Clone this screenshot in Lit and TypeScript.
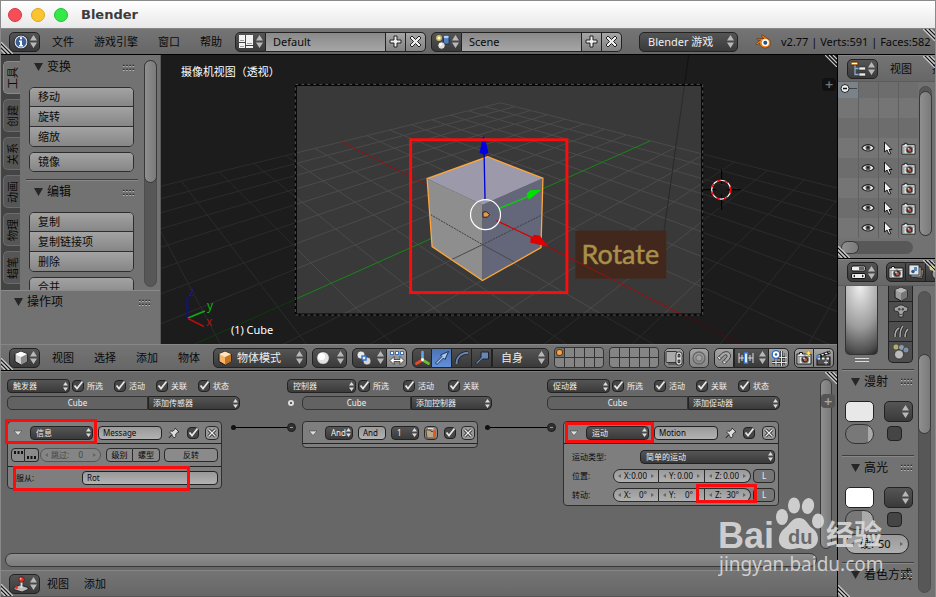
import { LitElement, html, svg, css } from "lit";
import { customElement } from "lit/decorators.js";

/* ---------- small glyphs ---------- */
const arrows = html`<svg class="arrows" width="7" height="13" viewBox="0 0 7 13"><path d="M3.500 0 7 5.500H0zM0 7.500H7L3.500 13z" /></svg>`;
const arrowsSmall = html`<svg class="arrows" width="5" height="9" viewBox="0 0 5 9"><path d="M2.500 0 5 3.500H0zM0 5.500H5L2.500 9z" /></svg>`;
const tick = html`<svg class="tick" width="12" height="12" viewBox="0 0 12 12"><path d="M2.500 5.500 5 8.500 10.500 1.500" fill="none" stroke="#e6e6e6" stroke-width="1.800" /></svg>`;
const plus = html`<svg width="13" height="13" viewBox="0 0 13 13"><path d="M5 1h3v4h4v3H8v4H5V8H1V5h4z" fill="#eee" stroke="#222" /></svg>`;
const cross = html`<svg width="13" height="13" viewBox="0 0 13 13"><path d="M3 1 6.500 4.500 10 1l2 2-3.500 3.500L12 10l-2 2-3.500-3.500L3 12l-2-2 3.500-3.500L1 3z" fill="#eee" stroke="#222" /></svg>`;
const crossSmall = html`<svg width="10" height="10" viewBox="0 0 10 10"><path d="M1.500 1.500l7 7M8.500 1.500l-7 7" stroke="#222" stroke-width="3" /><path d="M1.500 1.500l7 7M8.500 1.500l-7 7" stroke="#eee" stroke-width="1.400" /></svg>`;
const tri = html`<svg class="tri" width="9" height="8" viewBox="0 0 9 8"><path d="M0 0h9L4.500 8z" fill="#262626" /></svg>`;
const triLight = html`<svg width="8" height="6" viewBox="0 0 8 6"><path d="M0 1h8L4 5.500z" fill="#ddd" stroke="#444" stroke-width=".6" /></svg>`;
const grip = html`<svg class="grip" width="12" height="7" viewBox="0 0 12 7"><path d="M0 1.500h12M0 5.500h12" stroke="#2e2e2e" stroke-width="1.600" stroke-dasharray="1.500 1.700" /><path d="M0 2.500h12M0 6.500h12" stroke="#bbb" stroke-width="1" stroke-dasharray="1.500 1.700" /></svg>`;
const stripes = html`<svg width="12" height="12" viewBox="0 0 12 12"><path d="M0 0l12 12M4 0l8 8M8 0l4 4" stroke="#ccc" stroke-width="1.200" /><path d="M2 0l10 10M6 0l6 6" stroke="#151515" /></svg>`;
const stripesLeft = html`<svg width="12" height="12" viewBox="0 0 12 12"><path d="M0 0l12 12M0 4l8 8M0 8l4 4" stroke="#ccc" stroke-width="1.200" /><path d="M0 2l10 10M0 6l6 6" stroke="#151515" /></svg>`;
const pin = html`<svg width="12" height="12" viewBox="0 0 12 12"><path d="M7 1l4 4-1.500.300-1.800 1.800.100 2.500L6 11 3.800 7.900 1 10.800 4 7.500 1.500 5l1.200-1 2.300.200L6.700 2.500z" fill="#ddd" stroke="#222" stroke-width=".8" /></svg>`;

/* ---------- editor icons ---------- */
const icoInfo = html`<svg width="16" height="16" viewBox="0 0 16 16"><circle cx="8" cy="8" r="6" fill="#3c5f96" stroke="#dfe6f0" stroke-width="1.200" /><circle cx="8" cy="8" r="7" fill="none" stroke="#16202e" stroke-width=".7" /><path d="M7 3.300h2v2H7zM6 6.500h3v4.500h1V12.500H6V11h1V8H6z" fill="#fff" /></svg>`;
const icoLayout = html`<svg width="14" height="13" viewBox="0 0 14 13"><path d="M0 0h6v7H0zM0 8h6v5H0zM7 0h7v10H7zM7 11h7v2H7z" fill="#f2f2f2" /><path d="M1 5.500h4M1 11.500h4M8 8.500h5" stroke="#9a9a9a" /></svg>`;
const icoScene = html`<svg width="16" height="16" viewBox="0 0 16 16"><circle cx="4" cy="4" r="3" fill="#e8dc74" opacity=".75" /><circle cx="4" cy="4" r="1.500" fill="#fffbc0" /><path d="M8.500 3v7h5.500V3z" fill="#4f80c8" stroke="#18253a" stroke-width=".7" /><ellipse cx="11.200" cy="3" rx="2.700" ry="1.300" fill="#b6d0f0" /><circle cx="6.500" cy="11.500" r="3.700" fill="#ddd" stroke="#222" stroke-width=".7" /><circle cx="5.500" cy="10.500" r="1.300" fill="#fff" /></svg>`;
const icoBlender = html`<svg width="17" height="15" viewBox="0 0 17 15"><path d="M7 .8 14 5.500C17 8 16 13.500 10.500 14 6.500 14 4.800 11.500 4.500 9L2 11 .8 9.800 5.500 6H2V4.500h7L6.500 2.200z" fill="#ee7f17" stroke="#5b2b05" stroke-width=".6" /><circle cx="10.300" cy="8.700" r="3.600" fill="#fff" /><circle cx="10.300" cy="8.700" r="2" fill="#24508c" /></svg>`;
const cubeIcon = (top: string, left: string, right: string) => html`<svg width="16" height="16" viewBox="0 0 16 16"><path d="M8 1.500 14 4v7.500L8 15 2 11.500V4z" fill=${left} stroke="#161616" /><path d="M8 7v8l6-3.500V4z" fill=${right} /><path d="M8 1.500 14 4 8 7 2 4z" fill=${top} /></svg>`;
const icoCube = cubeIcon("#fff", "#d2d2d2", "#8b8b8b");
const icoOrange = cubeIcon("#ffe3bd", "#f5b468", "#c27624");
const icoGreyCube = cubeIcon("#b8b8b8", "#9c9c9c", "#777");
const icoSphere = html`<svg width="14" height="14" viewBox="0 0 14 14"><circle cx="7" cy="7" r="6.300" fill="#e2e2e2" stroke="#222" stroke-width=".6" /><circle cx="5.500" cy="5.500" r="3.500" fill="#fff" /></svg>`;
const icoPivot = html`<svg width="16" height="16" viewBox="0 0 16 16"><circle cx="5" cy="5" r="4" fill="#e8e8e8" stroke="#222" stroke-width=".6" /><circle cx="11" cy="11" r="4" fill="#d4d4d4" stroke="#222" stroke-width=".6" /><rect x="6" y="6" width="4" height="4" fill="#e8e8e8" stroke="#2c6dd0" stroke-width="1.400" /></svg>`;
const icoCenters = html`<svg width="16" height="16" viewBox="0 0 16 16"><g fill="#fff" stroke="#3f6fb6"><rect x="1.500" y="1.500" width="3" height="3" /><rect x="6.500" y="1.500" width="3" height="3" /><rect x="11.500" y="1.500" width="3" height="3" /></g><path d="M1 10.500 5 6.500V9.500h6V6.500l4 4-4 4V11.500H5v3z" fill="#fff" stroke="#333" stroke-width=".8" /></svg>`;
const icoAxes = html`<svg width="17" height="16" viewBox="0 0 17 16"><path d="M8.500 9V2" stroke="#6aa3ea" stroke-width="2.600" stroke-linecap="round" /><path d="M8.500 10 2.500 13.500" stroke="#e8492e" stroke-width="2.800" stroke-linecap="round" /><path d="M8.500 10l6 3.500" stroke="#6dbb3a" stroke-width="2.800" stroke-linecap="round" /><circle cx="8.500" cy="9.500" r="1.500" fill="#fff" /></svg>`;
const icoTranslate = html`<svg width="16" height="16" viewBox="0 0 16 16"><path d="M1.500 13 8 6.500 6.500 5 14.500 1.500 11 9.500 9.500 8 3 14.500z" fill="#a8c6f2" stroke="#15284a" stroke-width=".9" /></svg>`;
const icoRotate = html`<svg width="16" height="16" viewBox="0 0 16 16"><path d="M2.500 14C2.500 7 7 3 14 2.800" fill="none" stroke="#1b222e" stroke-width="3.600" /><path d="M2.500 14C2.500 7 7 3 14 2.800" fill="none" stroke="#6a86b4" stroke-width="2" /></svg>`;
const icoScale = html`<svg width="16" height="16" viewBox="0 0 16 16"><path d="M1.500 13 7 7.500V2h7.500v7H8.500L3 14.500z" fill="#6a86b4" stroke="#1b222e" /></svg>`;
const icoLock = html`<svg width="18" height="16" viewBox="0 0 18 16"><rect x="1" y="1.500" width="11" height="11" rx="1" fill="#aaa" stroke="#333" /><path d="M3 14h8" stroke="#333" /><g fill="none" stroke="#222" stroke-width="3"><rect x="12" y="3" width="4" height="6" rx="2" /><rect x="12" y="8" width="4" height="6" rx="2" /></g><g fill="none" stroke="#ddd" stroke-width="1.300"><rect x="12" y="3" width="4" height="6" rx="2" /><rect x="12" y="8" width="4" height="6" rx="2" /></g></svg>`;
const icoProp = html`<svg width="14" height="14" viewBox="0 0 14 14"><circle cx="7" cy="7" r="6" fill="none" stroke="#666" stroke-width="1.300" /><circle cx="7" cy="7" r="3.200" fill="#a3a3a3" stroke="#6d6d6d" /></svg>`;
const icoMagnet = html`<svg width="16" height="16" viewBox="0 0 16 16"><path d="M1.500 7.500 7 2.500C13-.5 17 5 13 9.500L8.500 14 6.500 12 10.500 7.500C12 5.500 10.500 4 8.500 5.300L3.500 9.800z" fill="#a9a9a9" stroke="#333" stroke-width=".9" /><path d="M1.500 7.500 3.500 9.800 5 8.500 3 6zM6.500 12l2 2 1.500-1.500-2-2z" fill="#e4e4e4" stroke="#333" stroke-width=".6" /></svg>`;
const icoIncrement = html`<svg width="16" height="14" viewBox="0 0 16 14"><path d="M1 2v10M4 4v6M12 4v6M15 2v10M1 7h14" stroke="#ddd" /><rect x="6.500" y="2" width="3" height="10" fill="#fff" stroke="#3b82e8" stroke-width="1.300" /></svg>`;
const icoSnapGrid = html`<svg width="16" height="16" viewBox="0 0 16 16"><path d="M5 5v11M10.500 1v15M15 3v12M1 12.500h15M5 7.500h11" stroke="#222" stroke-width="2.600" /><path d="M5 5v11M10.500 1v15M15 3v12M1 12.500h15M5 7.500h11" stroke="#e3e3e3" stroke-width="1.200" /><circle cx="5" cy="4.500" r="3.800" fill="#fff" stroke="#2f6cba" stroke-width="1.300" /><circle cx="5" cy="4.500" r="1.300" fill="#2a5fa6" /></svg>`;
const camera = (star: boolean, size = 16) => html`<svg width=${size} height=${size} viewBox="0 0 16 16"><path d="M1 4h2.500V2.500h3V4H15v10H1z" fill="#e6e6e6" stroke="#191919" /><path d="M1.500 6.500h13" stroke="#888" /><path d="M3 7v6.500" stroke="#999" stroke-width="1.500" /><circle cx="9" cy="9.500" r="3.600" fill="#2b2b2b" stroke="#777" /><circle cx="9.300" cy="9.700" r="1.700" fill="#c25a44" /><circle cx="8" cy="8.300" r="1" fill="#c8d4e4" />${star ? svg`<path d="M12.500 0l1 2.200L16 3l-2.300 1-1.200 2.300L11.500 4 9 3l2.500-.8z" fill="#ffe670" stroke="#b98d10" stroke-width=".5"/>` : ""}</svg>`;
const icoClap = html`<svg width="17" height="16" viewBox="0 0 17 16"><rect x="2" y="7" width="13" height="8" fill="#4e4e4e" stroke="#111" /><path d="M2 5.500 14.500 1l.8 2.300L3 7.500z" fill="#eee" stroke="#111" stroke-width=".8" /><path d="M5 4.500l2 2M8.500 3.200l2 2M12 2l2 2" stroke="#111" stroke-width="1.600" /><path d="M2.500 8.500h12" stroke="#eee" stroke-width="1.800" stroke-dasharray="2.500 2" /><path d="M9 12.500h4M11 10.500v4" stroke="#ccc" /><circle cx="2.500" cy="7" r="1.700" fill="#4b84d4" /></svg>`;
const icoTree = html`<svg width="15" height="16" viewBox="0 0 15 16"><path d="M4 4v9.500h4M4 7.500h4" fill="none" stroke="#8ba7cc" stroke-width="1.300" /><rect x="0" y="1" width="7" height="3" fill="#f5a23c" stroke="#222" stroke-width=".6" /><path d="M1 2.500h5" stroke="#fff" /><rect x="8" y="6" width="6.500" height="3" fill="#eee" stroke="#222" stroke-width=".6" /><rect x="8" y="12" width="6.500" height="3" fill="#eee" stroke="#222" stroke-width=".6" /></svg>`;
const icoProps = html`<svg width="15" height="14" viewBox="0 0 15 14"><rect x=".5" y="1" width="14" height="5" rx="1.500" fill="#eee" stroke="#111" /><path d="M8 2h5.500v3H8z" fill="#666" /><rect x=".5" y="8.500" width="14" height="5" rx="1.500" fill="#eee" stroke="#111" /><path d="M4 9.500 2 11l2 1.500zM11 9.500l2 1.500-2 1.500z" fill="#222" /></svg>`;
const icoLayers = html`<svg width="16" height="16" viewBox="0 0 16 16"><path d="M6 5h9v9H6z" fill="#8f845f" stroke="#222" stroke-width=".8" transform="rotate(10 10 10)" /><rect x="3" y="3" width="10" height="10" fill="#b5b5b5" stroke="#222" stroke-width=".8" /><rect x="1" y="1" width="10" height="10" fill="#dfe6ee" stroke="#222" stroke-width=".8" /><circle cx="5" cy="7.500" r="1.800" fill="#37597f" /><path d="M6 3h3v4H6z" fill="#5f86b5" /></svg>`;
const icoLamp = html`<svg width="16" height="16" viewBox="0 0 16 16"><circle cx="4" cy="4" r="2.500" fill="#d8cc74" /><circle cx="9" cy="10" r="5" fill="#999" stroke="#222" /></svg>`;
const icoMonkey = html`<svg width="16" height="16" viewBox="0 0 16 16"><path d="M4.500 3.500C6 1.500 10 1.500 11.500 3.500L15 4.500 14.500 8 11 8.500 10 10.500V14H6v-3.500L5 8.500 1.500 8 1 4.500z" fill="#a2a2a2" stroke="#222" stroke-width=".8" /><circle cx="6.200" cy="6.300" r="1.200" fill="#444" /><circle cx="9.800" cy="6.300" r="1.200" fill="#444" /><path d="M6.500 11.500h3" stroke="#555" /></svg>`;
const icoHair = html`<svg width="16" height="16" viewBox="0 0 16 16"><g fill="none" stroke="#222" stroke-width="3"><path d="M2 14C2 9 4 6 6 5M7 14c0-5 1-9 3-11M12 14c0-4 1-6 3-8" /></g><g fill="none" stroke="#aaa" stroke-width="1.500"><path d="M2 14C2 9 4 6 6 5M7 14c0-5 1-9 3-11M12 14c0-4 1-6 3-8" /></g></svg>`;
const icoPhysics = html`<svg width="18" height="17" viewBox="0 0 18 17"><circle cx="4" cy="4" r="2.500" fill="#cfc572" opacity=".8" /><circle cx="9.500" cy="4.500" r="3" fill="#8d9aa8" stroke="#333" stroke-width=".6" /><circle cx="14" cy="7" r="3" fill="#7d8fa6" stroke="#333" stroke-width=".6" /><circle cx="7" cy="11.500" r="4.500" fill="#bbb" stroke="#222" stroke-width=".7" /></svg>`;
const icoEye = html`<svg width="14" height="10" viewBox="0 0 14 10"><path d="M.8 5C4 .5 10 .5 13.200 5 10 9 4 9 .8 5z" fill="#eee" stroke="#222" stroke-width="1.100" /><circle cx="7" cy="4.800" r="2.500" fill="#555" /><circle cx="7" cy="4.500" r="1" fill="#111" /></svg>`;
const icoCursor = html`<svg width="10" height="14" viewBox="0 0 10 14"><path d="M1.500 1v10L4 9l2 4.300 1.800-.8L6 8.500h3z" fill="#f2f2f2" stroke="#161616" /></svg>`;
const icoJoystick = html`<svg width="16" height="16" viewBox="0 0 16 16"><path d="M1 11.500 7 9l8 2.500v2L9 16 1 13.500z" fill="#bbb" stroke="#181818" stroke-width=".8" /><path d="M8.500 12V5" stroke="#ddd" stroke-width="1.800" /><circle cx="8.500" cy="3.500" r="2.800" fill="#e33126" stroke="#4a0d08" stroke-width=".6" /><circle cx="7.600" cy="2.700" r=".9" fill="#ffb2aa" /><circle cx="3.500" cy="11.500" r="1.500" fill="#d8352a" /></svg>`;
const icoScript = html`<svg width="12" height="12" viewBox="0 0 12 12"><path d="M1 3h4l1 1.500h4V11H2z" fill="#b9a98c" stroke="#5e4a2f" /><path d="M3 1.500h5v2" fill="none" stroke="#ddd" /><path d="M8 3h3v8H8z" fill="#e8571c" /></svg>`;

/* ---------- controls ---------- */
const iconSelect = (label: string, icon: unknown, cls = "") => html`<span class="dd icon ${cls}"><select aria-label=${label}><option></option></select><i>${icon}</i>${arrows}</span>`;
const textSelect = (label: string, value: string, cls = "", small = false) => html`<span class="dd ${cls}"><select aria-label=${label}><option>${value}</option></select>${small ? arrowsSmall : arrows}</span>`;
const check = (text: string) => html`<label class="ck"><span class="box"><input type="checkbox" checked />${tick}</span>${text}</label>`;
const bareCheck = (label: string) => html`<span class="box"><input type="checkbox" checked aria-label=${label} />${tick}</span>`;
const num = (label: string, value: string, cls = "") => html`<label class="num ${cls}"><b></b><span>${label}</span><input type="text" .value=${value} /><b class="r"></b></label>`;
const menus = (names: string[], cls = "") => html`<nav class="menus ${cls}">${names.map((n) => html`<button>${n}</button>`)}</nav>`;
const heading = (text: string, cls = "") => html`<div class="heading ${cls}">${tri}<h2>${text}</h2>${grip}</div>`;

/* ---------- floor grid in perspective ---------- */
const project = (x: number, y: number) => {
  const u = -x / 8, v = y / 8;
  const w = 1 + 0.4606 * u + 0.4483 * v;
  return `${((485 + 13.07 * u + 456.4 * v) / w).toFixed(1)} ${((215 - 7.6 * u - 10.8 * v) / w).toFixed(1)}`;
};
const gridPath = Array.from({ length: 17 }, (_, i) => i - 8)
  .map((k) => (k === 0 ? "" : `M${project(-8, k)}L${project(8, k)}M${project(k, -8)}L${project(k, 8)}`))
  .join("");

@customElement("app-root")
export class AppRoot extends LitElement {
  static styles = css`
    * { box-sizing: border-box; }
    :host {
      display: flex; flex-direction: column; position: relative; height: 100vh; overflow: hidden; box-sizing: border-box;
      background: #000; color: #0a0a0a; border-left: 1px solid #8a8a8a; border-right: 1px solid #8a8a8a;
      font: 11px/14px "Noto Sans", "Noto Sans CJK SC", sans-serif;
    }
    button, input, select { font: inherit; color: inherit; margin: 0; padding: 0; border: 0; border-radius: 0; outline: 0; background: none; appearance: none; }
    svg { display: block; flex: none; }
    h1, h2 { margin: 0; font-weight: 400; }
    .titlebar { flex: none; display: flex; align-items: center; gap: 9px; height: 28px; padding-left: 7px; background: linear-gradient(#fff, #e8e8e8); border-top: 1px solid #8a8a8a; }
    .titlebar button { width: 14px; height: 14px; border-radius: 7px; border: 1px solid #d9363f; background: #f64e57; }
    .titlebar .min { background: #fdc431; border-color: #dba520; }
    .titlebar .max { background: #35e84a; border-color: #22bf35; }
    .titlebar h1 { font: bold 13px/20px "DejaVu Sans", sans-serif; color: #3e3a3c; margin-left: 4px; }

    .header { flex: none; position: relative; display: flex; align-items: center; height: 27px; padding-left: 8px; background: linear-gradient(#747474, #676767); border-top: 1px solid #868686; border-bottom: 1px solid #000; overflow: hidden; white-space: nowrap; }
    .header > * { flex: none; }
    .side .header { padding-left: 9px; }
    .corner { position: absolute; right: 0; top: 0; }
    .corner.bl { right: auto; top: auto; left: 0; bottom: 0; }
    .menus { display: flex; gap: 20px; margin-left: 12px; }
    .menus.tight { gap: 15px; margin-left: 7px; }
    .group { display: flex; height: 20px; }
    .header .gap { margin-left: 5px; }
    .grow { flex: 1; }

    .dd { display: inline-grid; align-items: center; height: 20px; flex: none; color: #eee; }
    .dd > * { grid-area: 1 / 1; }
    .dd select { width: 100%; height: 100%; padding-left: 8px; border: 1px solid #222; border-radius: 5px; background: linear-gradient(#555, #3a3a3a); cursor: pointer; }
    .dd i, .dd .arrows { pointer-events: none; }
    .dd i { margin-left: 4px; }
    .dd .arrows { justify-self: end; margin-right: 4px; fill: #b8b8b8; }
    .dd.icon { width: 31px; }
    .dd.icon .arrows { margin-right: 3px; }
    .dd.left select { border-radius: 5px 0 0 5px; }
    .dd.mid select { border-radius: 0; }
    .dd.right select { border-radius: 0 5px 5px 0; }
    .dd.w35 { width: 35px; }
    .mode { width: 94px; } .mode select { padding-left: 23px; }
    .header .engine { width: 99px; margin-left: 17px; }
    .orient { width: 57px; }
    .name { width: 120px; height: 20px; padding-left: 7px; border: 1px solid #222; border-left: 0; background: linear-gradient(#898989, #a6a6a6); }
    .ib { display: grid; place-items: center; width: 20px; height: 20px; border: 1px solid #222; border-left: 0; background: linear-gradient(#a5a5a5, #838383); }
    .ib.last { border-radius: 0 5px 5px 0; }
    .ib.first { border-radius: 5px 0 0 5px; border-left: 1px solid #222; }
    .ib.solo { border: 1px solid #333; border-radius: 5px; }
    .ib.dark { background: linear-gradient(#4f4f4f, #393939); }
    .ib.on { background: linear-gradient(#4a73b4, #6391d8); }
    .layers { display: grid; grid-template: repeat(2, 9px) / repeat(4, 9px) 8px; gap: 1px; border: 1px solid #333; border-radius: 4px; background: #333; overflow: hidden; height: 21px; margin-left: 5px; }
    .layers button { background: #858585; display: grid; place-items: center; }
    .layers .act { background: #6f6f6f; }
    .layers .act::after { content: ""; width: 5px; height: 5px; border-radius: 3px; background: #f2a44c; border: 1px solid #603000; }

    .body { flex: 1; min-height: 0; display: flex; }
    .main { flex: 1; min-width: 0; display: flex; flex-direction: column; }
    .side { flex: none; width: 98px; display: flex; flex-direction: column; border-left: 1px solid #000; background: #727272; }
    .view { flex: 290 1 0; min-height: 0; display: flex; }
    .shelf { flex: none; width: 160px; display: flex; flex-direction: column; background: #727272; border-right: 1px solid #5a5a5a; }
    .shelfbody { flex: 1; min-height: 0; display: flex; overflow: hidden; }
    .tabs { flex: none; width: 19px; display: flex; flex-direction: column; gap: 5px; padding: 6px 0 0 2px; background: #444; overflow: hidden; }
    .tabs button { flex: none; height: 33px; width: 17px; border: 1px solid #6c6c6c; border-right: 0; border-radius: 5px 0 0 5px; background: #565656; display: grid; place-items: center; }
    .tabs button.on { background: #727272; border-color: #8a8a8a; }
    .tabs span { writing-mode: vertical-rl; text-orientation: sideways; transform: rotate(180deg); line-height: 15px; }
    .panels { flex: 1; min-width: 0; padding: 3px 6px 0 6px; overflow: hidden; }
    .panels .heading { margin-bottom: 11px; }
    .heading { display: flex; align-items: center; height: 18px; padding: 0 3px 0 8px; }
    .heading h2 { font-size: 12px; line-height: 18px; margin-left: 4px; white-space: nowrap; min-width: 0; }
    .heading .grip { margin-left: auto; }
    .stack { display: flex; flex-direction: column; margin: 0 3px 5px 3px; border: 1px solid #2e2e2e; border-radius: 5px; overflow: hidden; width: 105px; }
    .stack button { height: 18px; text-align: left; padding-left: 8px; background: linear-gradient(#a3a3a3, #868686); }
    .stack button + button { border-top: 1px solid #2e2e2e; height: 20px; }
    .rule { height: 2px; border-top: 1px solid #3e3e3e; border-bottom: 1px solid #888; }
    .panels .rule { margin: 7px 0 2px; }
    .track { flex: none; width: 13px; border-radius: 7px; background: #575757; border: 1px solid #4d4d4d; }
    .thumb { border: 1px solid #383838; border-radius: 7px; background: linear-gradient(90deg, #8f8f8f, #7a7a7a); }
    .shelf .track { margin: 5px 3px 3px 0; }
    .shelf .thumb { height: 123px; margin: -1px; }
    .ops { flex: none; height: 54px; border-top: 1px solid #8a8a8a; padding: 2px 6px 0 5px; }
    .scene { flex: 1; min-width: 0; height: 100%; background: #1c1c1c; position: relative; }
    .scene svg.world { width: 100%; height: 100%; }
    .regionplus { position: absolute; right: 1px; top: 23px; width: 14px; height: 13px; border-radius: 4px; background: #111; color: #777; font: bold 11px/12px "DejaVu Sans", sans-serif; text-align: center; }
    .world text { font: 11px "Noto Sans", "Noto Sans CJK SC", sans-serif; fill: #fff; }
    .world .rot { font: 27px Lato, sans-serif; fill: #a98f4a; stroke: #a98f4a; stroke-width: 0.5px; }
    .world .ax { font-size: 12px; }
    .ax.z { fill: #1212c0; } .ax.y { fill: #10b010; } .ax.x { fill: #b81010; }

    /* logic editor */
    .logic { flex: 198 1 0; min-height: 0; position: relative; background: #676767; border-top: 1px solid #7c7c7c; display: flex; flex-direction: column; font-size: 8px; line-height: 12px; }
    .logicrow { flex: 1; min-height: 0; display: flex; padding: 7px 3px 0 6px; }
    .col { flex: none; display: flex; flex-direction: column; gap: 3px; }
    .col.s { width: 280px; } .col.c { width: 260px; } .col.a { width: 233px; }
    .line { display: flex; align-items: center; height: 14px; color: #f0f0f0; }
    .logic .dd { height: 14px; } .logic .dd select { padding-left: 5px; border-radius: 4px; }
    .logic .dd .arrows { margin-right: 2px; fill: #ddd; }
    .type { width: 63px; }
    .type.ctl { width: 69px; }
    .ck { display: flex; align-items: center; gap: 3px; width: 42px; color: #f0f0f0; }
    .ck:first-of-type { margin-left: 2px; }
    .wide .ck { width: 45px; }
    .box { display: inline-grid; flex: none; width: 12px; height: 12px; }
    .box > * { grid-area: 1 / 1; }
    .box input { width: 12px; height: 12px; border: 1px solid #222; border-radius: 4px; background: #474747; }
    .tick { pointer-events: none; }
    .obj { height: 14px; border: 1px solid #333; border-radius: 5px 0 0 5px; background: #626262; color: #eee; text-align: center; }
    .logic .dd.add select { border-radius: 0 5px 5px 0; padding-left: 4px; }
    .s .obj, .a .obj { width: 141px; } .s .add, .a .add { width: 92px; }
    .c .obj { width: 109px; margin-left: 7px; } .c .add { width: 81px; }
    .state { width: 6px; height: 6px; border: 2px solid #ddd; border-radius: 3px; background: #333; margin: 0 1px; }
    .brick { position: relative; margin-top: 8px; border: 1px solid #2f2f2f; border-radius: 4px; background: #7e7e7e; }
    .s .brick { width: 215px; } .c .brick { width: 176px; margin-left: 15px; } .a .brick { width: 216px; margin-left: 16px; }
    .bh { display: flex; align-items: center; height: 22px; padding: 0 2px 0 6px; border-bottom: 1px solid #222; }
    .fold { width: 8px; height: 8px; display: grid; place-items: center; margin-right: 8px; }
    .tf { width: 64px; height: 14px; padding-left: 4px; border: 1px solid #222; border-radius: 4px; background: linear-gradient(#999, #b2b2b2); }
    .type + .tf { margin-left: 5px; }
    .tf.flag { width: 28px; margin: 0 5px; }
    .tf.fill { flex: 1; }
    .w28 { width: 28px; }
    .lb { display: grid; place-items: center; width: 27px; height: 14px; border: 1px solid #2a2a2a; border-radius: 4px; background: #8a8a8a; }
    .lb.sq { width: 14px; } .lb.big { width: 54px; }
    .x { width: 14px; background: #999; }
    .br { display: flex; align-items: center; height: 22px; padding: 0 3px; }
    .br.top { border-top: 1px solid #222; }
    .l0 { border-radius: 4px 0 0 4px; } .r0 { border-radius: 0 4px 4px 0; border-left: 0; }
    .num { display: flex; align-items: center; height: 14px; padding: 0 4px; border: 1px solid #2a2a2a; background: linear-gradient(#9a9a9a, #b0b0b0); min-width: 0; }
    .num span { margin-left: 3px; white-space: nowrap; }
    .num input { flex: 1; min-width: 0; width: 10px; text-align: right; margin-right: 4px; }
    .num b { flex: none; border: 2px solid transparent; border-left: 0; border-right: 3px solid #666; }
    .num b.r { border-left: 3px solid #666; border-right: 0; }
    .num.xyz { width: 46px; } .num.xyz + .num.xyz { border-left: 0; }
    .num.st { border-radius: 7px 0 0 7px; } .num.en { border-radius: 0 7px 7px 0; }
    .num.off { width: 61px; border-radius: 7px; background: #858585; border-color: #555; color: #444; margin: 0 5px 0 1px; }
    .num.off input { margin-right: 10px; }
    .lab { width: 71px; padding-left: 5px; }
    .a .br { height: 19px; } .a .bd { padding: 3px 0 1px; } .a .lab { width: 46px; } .a .lab.long { width: 73px; }
    .grown { flex: 1; }
    .L { width: 22px; background: #767676; color: #eee; margin-left: auto; }
    .mark { position: absolute; border: 3px solid #fb0d0d; pointer-events: none; }
    .m1 { left: -3px; top: -3px; width: 92px; height: 25px; }
    .m2 { left: 5px; top: 44px; width: 177px; height: 25px; }
    .m3 { left: 1px; top: 0; width: 89px; height: 21px; }
    .m4 { left: 132px; top: 62px; width: 61px; height: 19px; }
    .wires { position: absolute; left: -1px; top: -1px; pointer-events: none; }
    .vtrack { margin-left: auto; display: flex; }
    .vtrack .thumb { flex: 1; width: 12px; margin-right: 2px; margin-bottom: 4px; }
    .hbar { flex: none; height: 14px; margin: 0 20px 3px 4px; background: linear-gradient(#8f8f8f, #7c7c7c); }
    .logicplus { position: absolute; right: 2px; top: 22px; width: 14px; height: 14px; border-radius: 4px; background: #555; color: #aaa; font: bold 11px/13px "DejaVu Sans", sans-serif; text-align: center; }
    .header.last { border-bottom-color: #555; }

    /* outliner + properties */
    .outliner { flex: 203 1 0; min-height: 0; display: flex; flex-direction: column; border-bottom: 1px solid #000; position: relative; }
    .side .header { border-bottom-color: #5c5c5c; }
    .outrow { flex: 1; min-height: 0; display: flex; }
    table { border-collapse: collapse; flex: none; width: 80px; table-layout: fixed; align-self: flex-start; }
    td { height: 20px; padding: 0; border-right: 1px solid #606060; }
    td:last-child { border-right: 0; }
    td svg { margin: 0 auto; }
    tr:first-child td { height: 16px; vertical-align: top; }
    tr:nth-child(odd) { background: #6d6d6d; } tr:nth-child(even) { background: #757575; }
    tr:first-child td:first-child { background: #7b838a; }
    .side .track { margin: 5px 4px 4px auto; display: flex; flex-direction: column; }
    .side .ot { margin: 4px 3px 0 auto; height: 150px; }
    .outrow .thumb { flex: 1; margin: 4px -1px -1px; }
    .htrack { width: 72px; height: 13px; border-radius: 7px; background: #585858; margin: 0 0 4px 3px; display: flex; }
    .htrack .thumb { width: 18px; }
    .props { flex: 339 1 0; min-height: 0; display: flex; flex-direction: column; position: relative; }
    .ptabs { margin-left: 8px; }
    .prow { flex: 1; min-height: 0; display: flex; overflow: hidden; }
    .pcol { width: 72px; margin-left: 4px; flex: none; }
    .ptop { display: flex; justify-content: space-between; padding: 0 1px 0 3px; height: 83px; }
    .ramp { width: 33px; height: 69px; border: 1px solid #333; border-top: 0; border-radius: 0 0 5px 5px; background: radial-gradient(ellipse 40px 76px at 45% 0, #efefef, #9b9b9b 55%, #4b4b4b 88%, #1f1f1f); }
    .rampgrip { width: 14px; height: 4px; margin: 3px auto 0; border-top: 1px solid #ddd; border-bottom: 1px solid #ddd; }
    .vt { display: flex; flex-direction: column; }
    .vt button { display: grid; place-items: center; width: 25px; height: 20px; border: 1px solid #222; border-top: 0; background: #4e4e4e; overflow: hidden; }
    .vt button:first-child { height: 16px; }
    .vt button:last-child { border-radius: 0 0 5px 5px; height: 21px; }
    .cell { display: grid; grid-template-columns: 29px 29px; justify-content: space-between; gap: 2px 0; padding: 0 1px 0 3px; margin: 10px 0 11px; }
    .sw { height: 21px; border: 1px solid #222; border-radius: 5px; background: #e8e8e8; }
    .sw.white { background: #fff; }
    .cell .dd { height: 21px; }
    input[type="range"] { width: 29px; height: 20px; border: 1px solid #333; border-radius: 10px; background: linear-gradient(90deg, #787878 80%, #aaa 80%); overflow: hidden; }
    input[type="range"].half { background: linear-gradient(90deg, #787878 60%, #aaa 60%); }
    input[type="range"]::-webkit-slider-thumb { appearance: none; width: 1px; height: 1px; }
    .cell .cb { width: 15px; height: 15px; margin: 2px 3px; border: 1px solid #222; border-radius: 4px; background: #454545; }
    .num.hard { width: 64px; height: 20px; border-radius: 10px; margin: -7px 0 8px 3px; padding: 0 5px; }
    .num.hard span { margin-left: 6px; } .num.hard input { text-align: left; padding-left: 4px; }
    .pcol .heading { margin-top: 2px; padding-left: 9px; padding-right: 1px; }
    .prow .thumb { height: 80px; margin: 62px -1px 0; }
    .splash { margin: 0 9px 0 17px; }
    .lead { margin-left: 13px; }
    .watermark { position: absolute; right: 49px; bottom: 18px; pointer-events: none; }
    .watermark text { fill: #dcdcdc; }
    .bai { font: bold 36px "Liberation Sans", sans-serif; }
    .jy { font: bold 28px "Noto Sans CJK SC", sans-serif; }
    .url { font: 19px "Noto Sans", sans-serif; }
    .watermark .du { font: bold 20px "Liberation Sans", sans-serif; fill: #6b6b6b; }
  `;

  private world() {
    return html`<svg class="world" viewBox="160 55 677 290" preserveAspectRatio="xMidYMid slice">
      <defs><clipPath id="frame"><rect x="295" y="85" width="407" height="230" /></clipPath></defs>
      <rect x="160" y="55" width="677" height="290" fill="#1c1c1c" />
      <path d=${gridPath} fill="none" stroke="#2b2b2b" />
      <path d="M193 345 650 141" stroke="#0d3c0d" /><path d="M341 142 741 345" stroke="#4a0c0c" />
      <path d="M688.500 55 659 265" stroke="#121212" />
      <g clip-path="url(#frame)">
        <rect x="295" y="85" width="407" height="230" fill="#393939" />
        <path d=${gridPath} fill="none" stroke="#4b4b4b" />
        <path d="M193 345 650 141" stroke="#178717" /><path d="M341 142 741 345" stroke="#8f1414" />
        <path d="M688.500 55 659 265" stroke="#2a2a2a" />
        <rect x="575" y="231" width="91" height="48" fill="#42271c" />
        <path d="M547 247 741 345" stroke="#8f1414" />
      </g>
      <rect x="295.500" y="85.500" width="406" height="229" fill="none" stroke="#000" />
      <rect x="294.500" y="84.500" width="408" height="231" fill="none" stroke="#000" />
      <rect x="294.500" y="84.500" width="408" height="231" fill="none" stroke="#585858" stroke-dasharray="3 3" />
      <text class="rot" x="581" y="264">Rotate</text>

      <path d="M426.500 179 482 205v76l-50.500-34z" fill="#8e8e8e" />
      <path d="M482 205 542.500 178.500 540.500 248 482 281z" fill="#646779" />
      <path d="M426.500 179 487 157l55.500 21.500L482 205z" fill="#9c9aaa" />
      <path d="M430 215 482 245 542 215" fill="none" stroke="#3e3e40" stroke-dasharray="2 1" />
      <path d="M451 260 482 245l33 18" fill="none" stroke="#48484a" />
      <path d="M426.500 179 487 157l55.500 21.500-2 69.500-58.500 33-50.500-34z" fill="none" stroke="#ffa63c" stroke-width="1.300" />
      <path d="M483.500 150 484.500 200" stroke="#0000d8" stroke-width="1.300" />
      <path d="M483 137v4" stroke="#0000e0" stroke-width="2" /><path d="M481.500 141h3.500l3 12-4.500 2-4.500-2z" fill="#0000e0" />
      <path d="M498 209l32-13" stroke="#00d800" stroke-width="1.300" /><path d="M541 190l-12.500 10-2.500-6 4-3.500z" fill="#00e000" />
      <path d="M496 221l36 17" stroke="#d80000" stroke-width="1.300" /><path d="M548 247l-18-4v-4l4-4 5.500 1z" fill="#e00000" />
      <circle cx="485" cy="215" r="15" fill="none" stroke="#fff" stroke-width="1.200" />
      <path d="M482.500 212.500 486 212l3 3-2 2.500h-4.500z" fill="#e59a4e" stroke="#222" />
      <rect x="410" y="140" width="156.500" height="153" fill="none" stroke="#fb0d0d" stroke-width="3" />

      <path d="M721.500 170v14M721.500 195v15M703 190h13M727 190h14" stroke="#000" />
      <circle cx="721" cy="190" r="9.500" fill="none" stroke="#fff" stroke-width="1.200" /><circle cx="721" cy="190" r="9.500" fill="none" stroke="#f00" stroke-width="1.200" stroke-dasharray="4 4" />
      <path d="M186.500 319v-22" stroke="#0a0ac0" stroke-width="1.600" /><path d="M187 318.500l17-7" stroke="#0fae0f" stroke-width="1.600" /><path d="M187 319l16 8" stroke="#b80f0f" stroke-width="1.600" />
      <text class="ax z" x="188" y="296">z</text><text class="ax y" x="206" y="310">y</text><text class="ax x" x="205" y="326">x</text>
      <text x="180" y="76">摄像机视图（透视）</text>
      <text x="230" y="335">(1) Cube</text>
    </svg>`;
  }

  private brickHead(type: string, name: string) {
    return html`<div class="bh"><button class="fold" aria-label="Fold">${triLight}</button>${textSelect("Type", type, "type", true)}
      <input class="tf" aria-label="Name" .value=${name} /><span class="grow"></span>${pin}<span class="grow"></span>${bareCheck("Active")}<span class="grow"></span><button class="lb x" aria-label="Remove">${crossSmall}</button></div>`;
  }

  private sensors() {
    return html`<section class="col s">
      <div class="line">${textSelect("Sensors", "触发器", "type", true)}${["所选", "活动", "关联", "状态"].map(check)}</div>
      <div class="line"><button class="obj">Cube</button>${textSelect("Add sensor", "添加传感器", "add", true)}</div>
      <div class="brick">
        ${this.brickHead("信息", "Message")}
        <div class="br"><button class="lb sq l0" aria-label="True pulse"><svg width="9" height="10" viewBox="0 0 9 10"><path d="M1 1v3M4.500 1v3M8 1v3" stroke="#111" stroke-width="2" /></svg></button><button class="lb sq r0" aria-label="False pulse"><svg width="9" height="10" viewBox="0 0 9 10"><path d="M1 6v3M4.500 6v3M8 6v3" stroke="#111" stroke-width="2" /></svg></button>
          ${num("跳过:", "0", "off")}<button class="lb l0">级别</button><button class="lb r0">螺型</button><span class="grow"></span><button class="lb big">反转</button></div>
        <div class="br top"><label class="lab" for="subject">服从:</label><input id="subject" class="tf fill" .value=${"Rot"} /></div>
        <div class="mark m1"></div><div class="mark m2"></div>
      </div>
    </section>`;
  }

  private controllers() {
    return html`<section class="col c">
      <div class="line wide">${textSelect("Controllers", "控制器", "type ctl", true)}${["所选", "活动", "关联"].map(check)}</div>
      <div class="line"><button class="state" aria-label="State"></button><button class="obj">Cube</button>${textSelect("Add controller", "添加控制器", "add", true)}</div>
      <div class="brick">
        <div class="bh"><button class="fold" aria-label="Fold">${triLight}</button>${textSelect("Logic", "And", "w28", true)}
          <input class="tf flag" aria-label="Name" .value=${"And"} />${textSelect("State number", "1", "w28", true)}<span class="grow"></span><button class="lb sq" aria-label="Script">${icoScript}</button><span class="grow"></span>${bareCheck("Active")}<span class="grow"></span><button class="lb x" aria-label="Remove">${crossSmall}</button></div>
        <div style="height:3px"></div>
      </div>
    </section>`;
  }

  private actuators() {
    return html`<section class="col a">
      <div class="line">${textSelect("Actuators", "促动器", "type", true)}${["所选", "活动", "关联", "状态"].map(check)}</div>
      <div class="line"><button class="obj">Cube</button>${textSelect("Add actuator", "添加促动器", "add", true)}</div>
      <div class="brick">
        ${this.brickHead("运动", "Motion")}
        <div class="bd">
          <div class="br"><span class="lab long">运动类型:</span>${textSelect("Motion type", "简单的运动", "grown", true)}</div>
          <div class="br"><span class="lab">位置:</span>${num("X:", "0.00", "xyz st")}${num("Y:", "0.00", "xyz")}${num("Z:", "0.00", "xyz en")}<button class="lb L">L</button></div>
          <div class="br"><span class="lab">转动:</span>${num("X:", "0°", "xyz st")}${num("Y:", "0°", "xyz")}${num("Z:", "30°", "xyz en")}<button class="lb L">L</button></div>
        </div>
        <div class="mark m3"></div><div class="mark m4"></div>
      </div>
    </section>`;
  }

  render() {
    return html`
      <header class="titlebar"><button aria-label="Close"></button><button class="min" aria-label="Minimize"></button><button class="max" aria-label="Maximize"></button><h1>Blender</h1></header>
      <div class="header">
        ${iconSelect("Editor type", icoInfo)}${menus(["文件", "游戏引擎", "窗口", "帮助"])}
        <div class="group lead">${iconSelect("Screen layout", icoLayout, "left")}<input class="name" aria-label="Layout" .value=${"Default"} /><button class="ib" aria-label="Add layout">${plus}</button><button class="ib last" aria-label="Delete layout">${cross}</button></div>
        <div class="group gap">${iconSelect("Scene", icoScene, "left")}<input class="name" aria-label="Scene name" .value=${"Scene"} /><button class="ib" aria-label="Add scene">${plus}</button><button class="ib last" aria-label="Delete scene">${cross}</button></div>
        ${textSelect("Engine", "Blender 游戏", "engine")}
        <span class="splash">${icoBlender}</span><span>v2.77 | Verts:591 | Faces:582</span>
        <span class="corner">${stripes}</span><span class="corner bl">${stripesLeft}</span>
      </div>
      <div class="body">
        <main class="main">
          <div class="view">
            <aside class="shelf">
              <div class="shelfbody">
                <div class="tabs">${["工具", "创建", "关系", "动画", "物理", "蜡笔"].map((t, i) => html`<button class=${i === 0 ? "on" : ""}><span>${t}</span></button>`)}</div>
                <div class="panels">
                  ${heading("变换")}
                  <div class="stack"><button>移动</button><button>旋转</button><button>缩放</button></div>
                  <div class="stack"><button>镜像</button></div>
                  <div class="rule"></div>
                  ${heading("编辑")}
                  <div class="stack"><button>复制</button><button>复制链接项</button><button>删除</button></div>
                  <div class="stack"><button>合并</button></div>
                </div>
                <div class="track"><div class="thumb"></div></div>
              </div>
              <div class="ops">${heading("操作项")}</div>
            </aside>
            <div class="scene">${this.world()}<button class="regionplus" aria-label="Open properties region">+</button><span class="corner">${stripes}</span></div>
          </div>
          <div class="header">
            ${iconSelect("Editor type", icoCube)}${menus(["视图", "选择", "添加", "物体"])}
            <span class="dd mode lead"><select aria-label="Mode"><option>物体模式</option></select><i>${icoOrange}</i>${arrows}</span>
            ${iconSelect("Shading", icoSphere, "w35 gap")}
            <div class="group gap">${iconSelect("Pivot", icoPivot, "w35 left")}<button class="ib last" aria-label="Manipulate centers">${icoCenters}</button></div>
            <div class="group gap"><button class="ib first dark" aria-label="Manipulator">${icoAxes}</button><button class="ib on" aria-label="Translate">${icoTranslate}</button><button class="ib dark" aria-label="Rotate">${icoRotate}</button><button class="ib dark" aria-label="Scale">${icoScale}</button>${textSelect("Orientation", "自身", "orient right")}</div>
            ${[true, false].map((first) => html`<div class="layers">${Array.from({ length: 10 }, (_, i) => html`<button aria-label="Layer" class=${first && i === 0 ? "act" : ""}></button>`)}</div>`)}
            <button class="ib solo gap" aria-label="Lock layers">${icoLock}</button>
            <button class="ib solo gap" aria-label="Proportional editing">${icoProp}</button>
            <div class="group gap"><button class="ib first" aria-label="Snap">${icoMagnet}</button>${iconSelect("Snap element", icoIncrement, "w35 mid")}<button class="ib last" aria-label="Snap to grid">${icoSnapGrid}</button></div>
            <div class="group gap"><button class="ib first" aria-label="Render image">${camera(true)}</button><button class="ib last" aria-label="Render animation">${icoClap}</button></div>
            <span class="corner bl">${stripesLeft}</span>
          </div>
          <div class="logic">
            <div class="logicrow">${this.sensors()}${this.controllers()}${this.actuators()}<div class="vtrack"><div class="thumb"></div></div></div>
            <div class="thumb hbar"></div>
            <svg class="wires" width="600" height="100" viewBox="0 371 600 100"><g stroke="#000" stroke-width="1.200"><path d="M233 427.500h58M487 427.500h64" /></g><g fill="#111"><circle cx="233.500" cy="427.500" r="2.500" /><circle cx="487.500" cy="427.500" r="2.500" /></g><g fill="#333" stroke="#222" stroke-width="1.300"><circle cx="291.500" cy="427.500" r="3.800" /><circle cx="551.500" cy="427.500" r="3.800" /></g><path d="M290 427.500h3M550 427.500h3" stroke="#999" /></svg>
            <button class="logicplus" aria-label="Open region">+</button><span class="corner">${stripes}</span>
          </div>
          <div class="header last">${iconSelect("Editor type", icoJoystick)}${menus(["视图", "添加"], "tight")}<span class="corner bl">${stripesLeft}</span></div>
        </main>
        <aside class="side">
          <section class="outliner">
            <div class="header">${iconSelect("Editor type", icoTree)}${menus(["视图", "搜索"])}<span class="corner">${stripes}</span></div>
            <div class="outrow">
              <table>
                <tr><td><svg width="19" height="12" viewBox="0 0 19 12"><path d="M9 6.500h10" stroke="#444" /><circle cx="7" cy="6.500" r="4" fill="#eee" stroke="#222" /><path d="M5 6.500h4" stroke="#111" stroke-width="1.500" /></svg></td><td></td><td></td><td></td></tr>
                <tr><td></td><td></td><td></td><td></td></tr><tr><td></td><td></td><td></td><td></td></tr>
                ${[0, 1, 2, 3, 4].map(() => html`<tr><td></td><td>${icoEye}</td><td>${icoCursor}</td><td>${camera(false, 15)}</td></tr>`)}
              </table>
              <div class="track ot"><div class="thumb"></div></div>
            </div>
            <div class="htrack"><div class="thumb"></div></div>
            <span class="corner bl">${stripesLeft}</span>
          </section>
          <section class="props">
            <div class="header">${iconSelect("Editor type", icoProps)}<div class="group ptabs"><button class="ib first dark" aria-label="Render">${camera(false)}</button><button class="ib dark" aria-label="Render layers">${icoLayers}</button><button class="ib dark" aria-label="Scene">${icoLamp}</button></div><span class="corner">${stripes}</span></div>
            <div class="prow">
              <div class="pcol">
                <div class="ptop"><div><div class="ramp"></div><div class="rampgrip"></div></div>
                  <div class="vt">${[["Object", icoGreyCube], ["Data", icoMonkey], ["Particles", icoHair], ["Physics", icoPhysics]].map(([n, i]) => html`<button aria-label=${n as string}>${i}</button>`)}</div></div>
                <div class="rule"></div>
                ${heading("漫射")}
                <div class="cell"><button class="sw" aria-label="Diffuse color"></button><span class="dd"><select aria-label="Diffuse shader"><option></option></select>${arrows}</span><input type="range" aria-label="Diffuse intensity" /><input class="cb" type="checkbox" aria-label="Diffuse ramp" /></div>
                <div class="rule"></div>
                ${heading("高光")}
                <div class="cell"><button class="sw white" aria-label="Specular color"></button><span class="dd"><select aria-label="Specular shader"><option></option></select>${arrows}</span><input class="half" type="range" aria-label="Specular intensity" /><input class="cb" type="checkbox" aria-label="Specular ramp" /></div>
                ${num("硬:", "50", "hard")}
                <div class="rule"></div>
                ${heading("着色方式")}
              </div>
              <div class="track"><div class="thumb"></div></div>
            </div>
            <span class="corner bl">${stripesLeft}</span>
          </section>
        </aside>
      </div>
      <svg class="watermark" width="168" height="84" viewBox="718 495 168 84" opacity=".88">
        <text class="bai" x="718" y="548">Bai</text>
        <g fill="#dcdcdc"><ellipse cx="782" cy="517" rx="6" ry="8" /><ellipse cx="794" cy="505.500" rx="6" ry="8" /><ellipse cx="808" cy="506" rx="6" ry="8" transform="rotate(12 808 506)" /><ellipse cx="818" cy="521" rx="6" ry="7.500" /><path d="M799 518c7 0 8 6 13 10 8 5 9 19-3 21-5 1-6-1-10-1s-6 2-11 1c-11-1-12-14-3-21 5-4 7-10 14-10z" /></g>
        <text class="du" x="788" y="544">du</text>
        <text class="jy" x="826" y="545">经验</text>
        <text class="url" x="719" y="571">jingyan.baidu.com</text>
      </svg>`;
  }
}
